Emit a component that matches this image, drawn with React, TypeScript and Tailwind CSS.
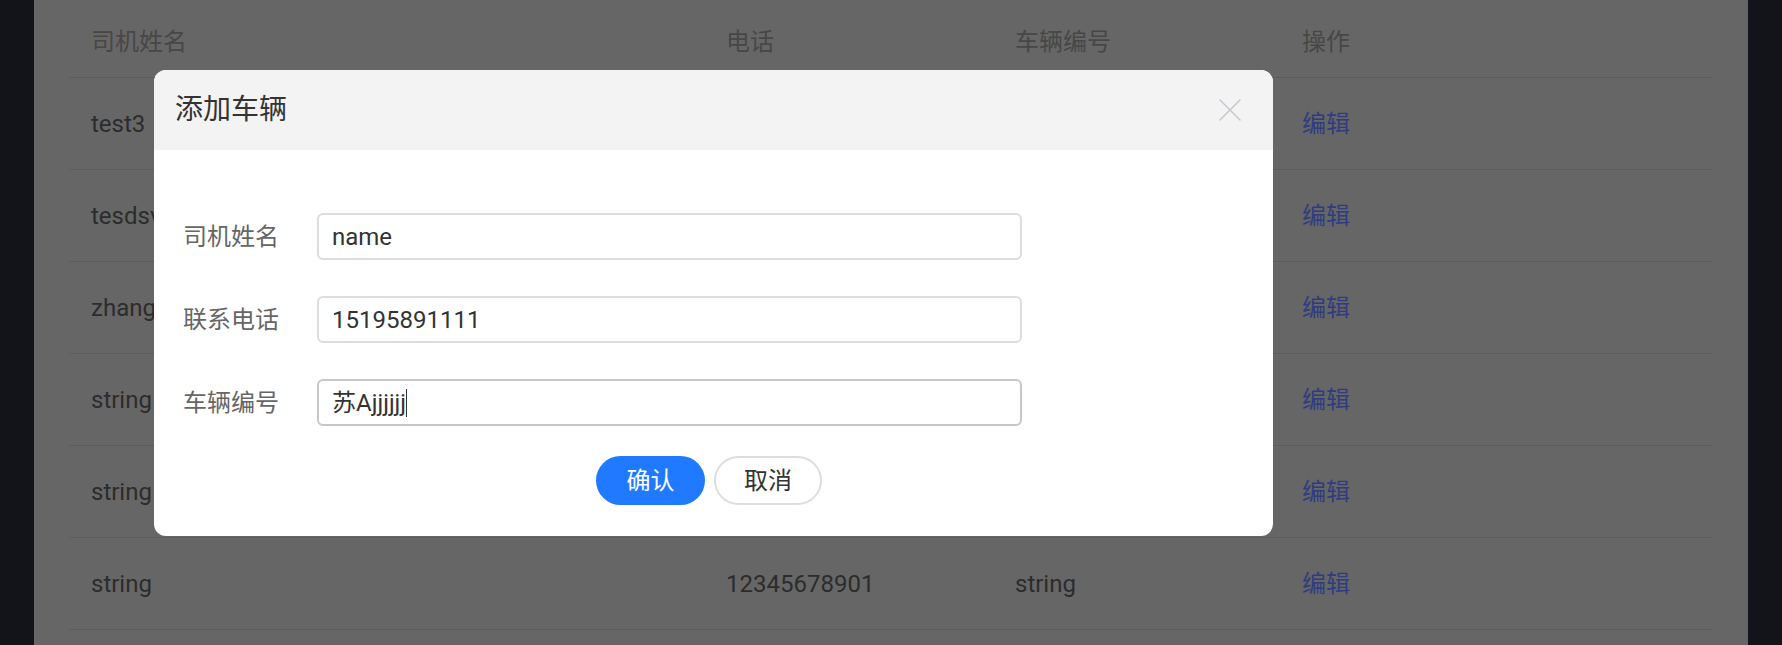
import { X } from "lucide-react";

type Driver = {
  name: string;
  phone: string;
  plate: string;
};

// rows 1-5 sit behind the dialog, only the name column peeks out
const drivers: Driver[] = [
  { name: "test3", phone: "", plate: "" },
  { name: "tesdsvdsf", phone: "", plate: "" },
  { name: "zhangsan", phone: "", plate: "" },
  { name: "string", phone: "", plate: "" },
  { name: "string", phone: "", plate: "" },
  { name: "string", phone: "12345678901", plate: "string" },
];

const fields = [
  { label: "司机姓名", value: "name", focused: false },
  { label: "联系电话", value: "15195891111", focused: false },
  { label: "车辆编号", value: "苏Ajjjjjj", focused: true },
];

export default function App() {
  return (
    <div
      className="relative flex w-[1782px] h-[645px] overflow-hidden bg-[#131419]"
      style={{ fontFamily: 'Roboto, "Noto Sans CJK SC", sans-serif' }}
    >
      <div className="w-[34px] shrink-0" />

      {/* Driver table (dimmed behind the dialog) */}
      <div className="flex-1 bg-[#666666] px-[35px]">
        <div className="grid grid-cols-[635px_289px_287px_1fr] h-[78px] pt-[6px] items-center border-b border-[#5c5c5c] text-[24px] text-[#474747]">
          <span className="pl-[22px]">司机姓名</span>
          <span className="pl-[22px]">电话</span>
          <span className="pl-[22px]">车辆编号</span>
          <span className="pl-[22px]">操作</span>
        </div>
        {drivers.map((d, i) => (
          <div
            key={i}
            className="grid grid-cols-[635px_289px_287px_1fr] h-[92px] items-center border-b border-[#5c5c5c] text-[24px] text-[#2c2c2c]"
          >
            <span className="pl-[22px] whitespace-nowrap overflow-hidden">
              {d.name}
            </span>
            <span className="pl-[22px]">{d.phone}</span>
            <span className="pl-[22px]">{d.plate}</span>
            <span className="pl-[22px] text-[#303c82]">编辑</span>
          </div>
        ))}
      </div>

      <div className="w-[34px] shrink-0" />

      {/* Add vehicle dialog */}
      <div className="absolute left-[154px] top-[70px] w-[1119px] h-[466px] rounded-[12px] bg-white overflow-hidden">
        <div className="flex h-[80px] items-center justify-between bg-[#f3f3f3] pl-[21px] pr-[23px]">
          <h2 className="text-[28px] text-[#333333]">添加车辆</h2>
          <X size={40} strokeWidth={0.9} className="text-[#c6c8d0]" />
        </div>

        <div className="flex flex-col pt-[63px] pl-[29px] gap-[36px]">
          {fields.map((f) => (
            <div key={f.label} className="flex items-center">
              <label className="w-[134px] text-[24px] text-[#666666]">
                {f.label}
              </label>
              <div
                className={`flex items-center w-[705px] h-[47px] rounded-[6px] border-2 px-[13px] text-[24px] text-[#333333] ${
                  f.focused ? "border-[#c4c7ce]" : "border-[#dcdde1]"
                }`}
              >
                <span>{f.value}</span>
                {f.focused && <span className="w-px h-[28px] bg-[#333333]" />}
              </div>
            </div>
          ))}
        </div>

        <div className="flex justify-center gap-[9px] mt-[30px] pr-[9px]">
          <button className="w-[109px] h-[49px] rounded-full bg-[#1f7aff] text-[24px] text-white">
            确认
          </button>
          <button className="w-[108px] h-[49px] rounded-full border-2 border-[#dcdde3] bg-white text-[24px] text-[#333333]">
            取消
          </button>
        </div>
      </div>
    </div>
  );
}
